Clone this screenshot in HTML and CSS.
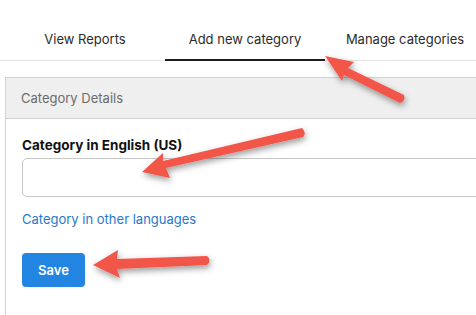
FILE: index.html
```html
<!DOCTYPE html>
<html lang="en">
<head>
    <meta charset="UTF-8">
    <meta name="viewport" content="width=device-width, initial-scale=1.0">
    <title>Add new category</title>
    <link rel="stylesheet" href="styles.css">
</head>
<body>
    <!-- Tabs -->
    <div class="tabs">
        <a href="#" class="tab">View Reports</a>
        <a href="#" class="tab active">Add new category</a>
        <a href="#" class="tab">Manage categories</a>
    </div>

    <!-- Category form -->
    <div class="panel">
        <div class="panel-header">Category Details</div>
        <div class="panel-body">
            <label class="field-label" for="category-en">Category in English (US)</label>
            <input type="text" id="category-en" class="field-input">
            <a href="#" class="other-langs">Category in other languages</a>
            <button class="save-btn">Save</button>
        </div>
    </div>

    <!-- Annotation arrows -->
    <svg class="arrows" width="476" height="315" viewBox="0 0 476 315">
        <defs>
            <filter id="shadow" x="-20%" y="-50%" width="140%" height="200%">
                <feDropShadow dx="1" dy="3" stdDeviation="3" flood-color="#000" flood-opacity="0.4"/>
            </filter>
        </defs>
        <g fill="#f2564a" filter="url(#shadow)">
            <path d="M325 56 L354 62 L348 68 L404 95 Q406 101 400 103 L344 75 L342 81 Z"/>
            <path d="M142 172 L163 153 L163 161 L302 128 Q307 133 303 137 L166 168 L170 178 Z"/>
            <path d="M93 265 L118 250 L117 259 L207 256 Q212 260 207 265 L117 269 L120 278 Z"/>
        </g>
    </svg>
</body>
</html>
```

FILE: styles.css
```css
body {
    margin: 0;
    font-family: Inter, "Noto Sans", sans-serif;
    color: #222;
    background: #fff;
    width: 476px;
    height: 315px;
    overflow: hidden;
    position: relative;
}
.tabs {
    display: flex;
    padding-left: 5px;
    border-bottom: 1px solid #e6e6e6;
}
.tab {
    width: 160px;
    flex: none;
    height: 61px;
    display: flex;
    align-items: flex-end;
    justify-content: center;
    padding-bottom: 12px;
    font-size: 13px;
    color: #2b2b2b;
    text-decoration: none;
    border-bottom: 2px solid transparent;
    box-sizing: border-box;
    margin-bottom: -1px;
}
.tab.active {
    border-bottom-color: #1e1e1e;
}
.panel {
    margin: 16px 0 0 5px;
    width: 600px;
    border: 1px solid #d2d2d2;
    border-bottom: none;
}
.panel-header {
    height: 40px;
    background: #efefef;
    border-bottom: 1px solid #d2d2d2;
    padding-left: 15px;
    display: flex;
    align-items: center;
    font-size: 13px;
    color: #6c6c6c;
}
.panel-body {
    padding: 18px 16px 40px;
    display: flex;
    flex-direction: column;
    align-items: flex-start;
}
.field-label {
    font-size: 13.5px;
    font-weight: 700;
    color: #111;
    margin-bottom: 5px;
}
.field-input {
    width: 100%;
    height: 39px;
    box-sizing: border-box;
    border: 1px solid #c8c8c8;
    border-radius: 5px;
    margin: 0;
}
.other-langs {
    margin-top: 14px;
    font-size: 13px;
    color: #2a78c8;
    text-decoration: none;
}
.save-btn {
    margin-top: 26px;
    width: 63px;
    height: 34px;
    background: #2385e2;
    color: white;
    border: none;
    border-radius: 4px;
    font-family: inherit;
    font-size: 13px;
    font-weight: 600;
    cursor: pointer;
}
.arrows {
    position: absolute;
    left: 0;
    top: 0;
    pointer-events: none;
}
```
